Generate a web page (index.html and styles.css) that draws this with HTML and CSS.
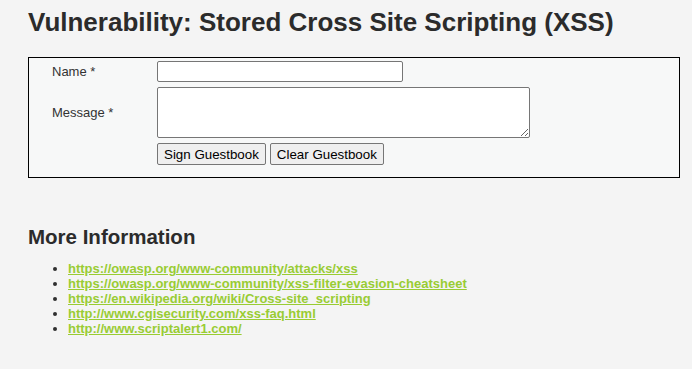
FILE: index.html
```html
<!DOCTYPE html>
<html>
<head>
    <title>Vulnerability: Stored Cross Site Scripting (XSS)</title>
    <link rel="stylesheet" href="styles.css">
</head>
<body>
    <div class="body-padded">
        <h1>Vulnerability: Stored Cross Site Scripting (XSS)</h1>

        <div class="vulnerable-code-area">
            <form name="guestform" class="guest-form">
                <label for="txtName">Name *</label>
                <div><input id="txtName" name="txtName" type="text" class="name-input" maxlength="10"></div>
                <label for="mtxMessage">Message *</label>
                <div><textarea id="mtxMessage" name="mtxMessage" class="message-input"></textarea></div>
                <span></span>
                <div class="buttons">
                    <button type="button">Sign Guestbook</button>
                    <button type="button">Clear Guestbook</button>
                </div>
            </form>
        </div>

        <h2>More Information</h2>
        <ul class="links">
            <li><a href="#">https://owasp.org/www-community/attacks/xss</a></li>
            <li><a href="#">https://owasp.org/www-community/xss-filter-evasion-cheatsheet</a></li>
            <li><a href="#">https://en.wikipedia.org/wiki/Cross-site_scripting</a></li>
            <li><a href="#">http://www.cgisecurity.com/xss-faq.html</a></li>
            <li><a href="#">http://www.scriptalert1.com/</a></li>
        </ul>
    </div>
</body>
</html>
```

FILE: styles.css
```css
body {
    margin: 0;
    background: #f4f4f4;
    font-family: "Liberation Sans", Arial, sans-serif;
    font-size: 13px;
    color: #2f2f2f;
}
.body-padded {
    padding: 7px 12px 0 28px;
}
h1 {
    margin: 0 0 20px 0;
    font-size: 26px;
    line-height: 30px;
    font-weight: bold;
    color: #2b2b2b;
}
.vulnerable-code-area {
    border: 1px solid #000;
    background: #f7f8f8;
    padding: 3px 20px 12px 23px;
}
.guest-form {
    display: grid;
    grid-template-columns: 105px auto;
    row-gap: 5px;
    align-items: center;
}
.guest-form label {
    color: #333;
}
.name-input {
    display: block;
    box-sizing: border-box;
    width: 246px;
    height: 21px;
    margin: 0;
    border: 1px solid #767676;
    border-radius: 2px;
    background: #fff;
}
.message-input {
    display: block;
    box-sizing: border-box;
    width: 373px;
    height: 51px;
    margin: 0;
    border: 1px solid #767676;
    border-radius: 2px;
    background: #fff;
}
.buttons {
    display: flex;
    gap: 4px;
}
.buttons button {
    height: 22px;
    margin: 0;
    padding: 1px 6px;
    font-family: "Liberation Sans", Arial, sans-serif;
    font-size: 13.33px;
    color: #000;
    background: #efefef;
    border: 1px solid #767676;
    border-radius: 2px;
}
h2 {
    margin: 47px 0 12px 0;
    font-size: 20.5px;
    line-height: 24px;
    font-weight: bold;
    color: #2b2b2b;
}
.links {
    margin: 0;
    padding-left: 40px;
    line-height: 15px;
}
.links a {
    color: #99cc33;
    font-weight: bold;
    text-decoration: underline;
}
```
